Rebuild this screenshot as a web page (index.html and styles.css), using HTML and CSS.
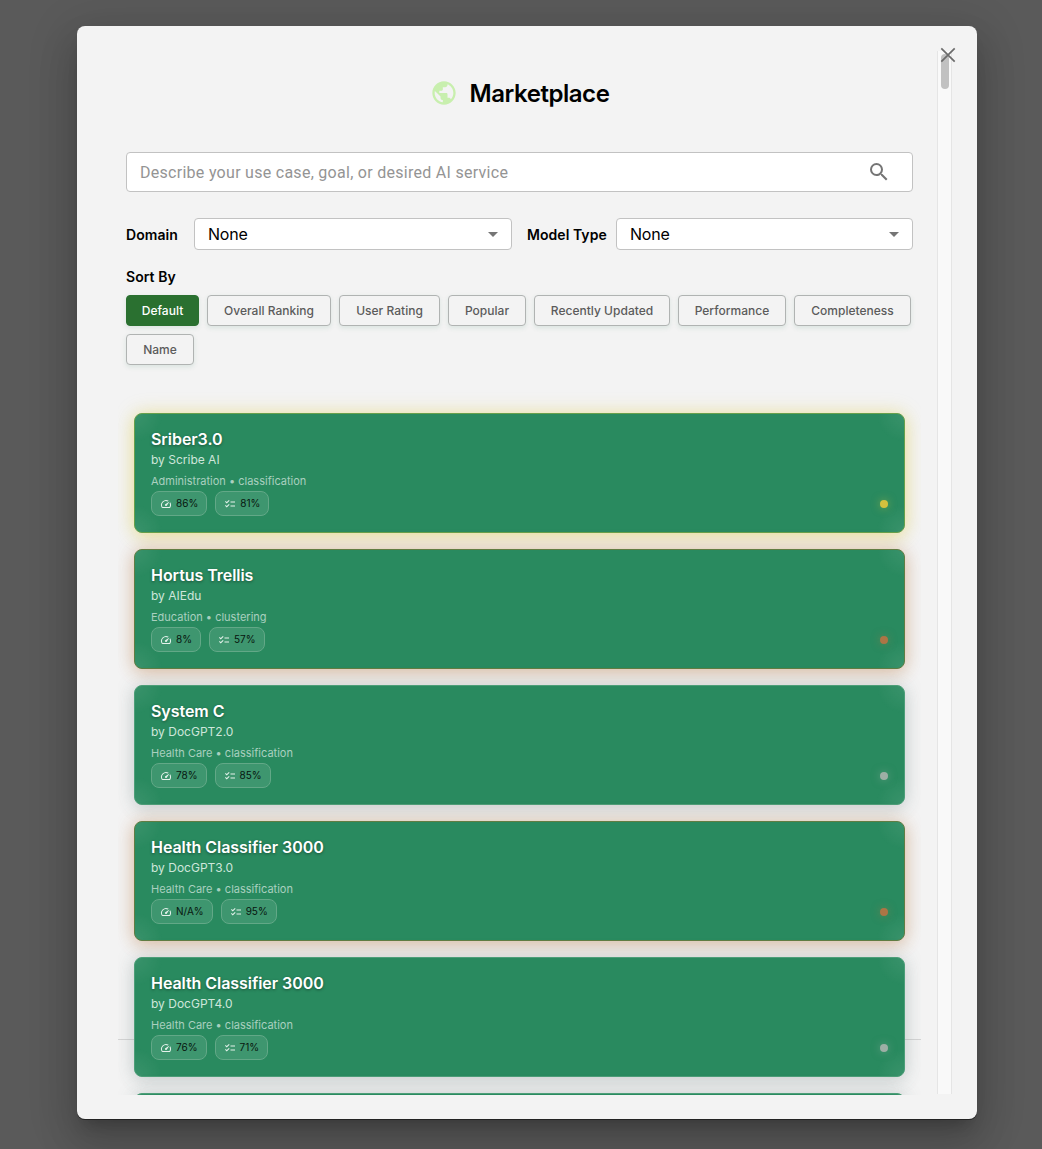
FILE: index.html
```html
<!DOCTYPE html>
<html lang="en">
<head>
<meta charset="utf-8">
<title>Marketplace</title>
<link rel="stylesheet" href="styles.css">
</head>
<body>
<svg class="sprite" aria-hidden="true">
  <symbol id="speed" viewBox="0 0 24 24"><path d="M20.38 8.57l-1.23 1.85a8 8 0 0 1-.22 7.58H5.07A8 8 0 0 1 15.58 6.85l1.85-1.23A10 10 0 0 0 3.35 19a2 2 0 0 0 1.72 1h13.85a2 2 0 0 0 1.74-1 10 10 0 0 0-.27-10.44zm-9.79 6.84a2 2 0 0 0 2.83 0l5.66-8.49-8.49 5.66a2 2 0 0 0 0 2.83z"/></symbol>
  <symbol id="checklist" viewBox="0 0 24 24"><path d="M22 7h-9v2h9V7zm0 8h-9v2h9v-2zM5.54 11L2 7.46l1.41-1.41 2.12 2.12 4.24-4.24 1.41 1.41L5.54 11zm0 8L2 15.46l1.41-1.41 2.12 2.12 4.24-4.24 1.41 1.41L5.54 19z"/></symbol>
</svg>
<main class="modal">
  <section class="content">
    <header class="heading">
      <svg class="globe" viewBox="0 0 24 24"><path d="M12 2C6.48 2 2 6.48 2 12s4.48 10 10 10 10-4.48 10-10S17.52 2 12 2zm-1 17.93c-3.95-.49-7-3.85-7-7.93 0-.62.08-1.21.21-1.79L9 15v1c0 1.1.9 2 2 2v1.93zm6.9-2.54c-.26-.81-1-1.39-1.9-1.39h-1v-3c0-.55-.45-1-1-1H8v-2h2c.55 0 1-.45 1-1V7h2c1.1 0 2-.9 2-2v-.41c2.93 1.19 5 4.06 5 7.41 0 2.08-.8 3.97-2.1 5.39z"/></svg>
      <h1>Marketplace</h1>
    </header>
    <div class="search">
      <span class="placeholder">Describe your use case, goal, or desired AI service</span>
      <svg class="search-icon" viewBox="0 0 24 24"><path d="M15.5 14h-.79l-.28-.27A6.47 6.47 0 0 0 16 9.5 6.5 6.5 0 1 0 9.5 16c1.61 0 3.09-.59 4.23-1.57l.27.28v.79l5 4.99L20.49 19l-4.99-5zm-6 0C7.01 14 5 11.99 5 9.5S7.01 5 9.5 5 14 7.01 14 9.5 11.99 14 9.5 14z"/></svg>
    </div>
    <div class="filters">
      <span class="label domain-label">Domain</span>
      <div class="select"><span>None</span><i class="arrow"></i></div>
      <span class="label model-label">Model Type</span>
      <div class="select model"><span>None</span><i class="arrow"></i></div>
    </div>
    <div class="label sort-label">Sort By</div>
    <div class="sorts">
      <button class="sort active w73">Default</button>
      <button class="sort w124">Overall Ranking</button>
      <button class="sort w101">User Rating</button>
      <button class="sort w78">Popular</button>
      <button class="sort w136">Recently Updated</button>
      <button class="sort w108">Performance</button>
      <button class="sort w117">Completeness</button>
      <button class="sort w68">Name</button>
    </div>
    <div class="list">
      <hr class="divider">
      <article class="card gold">
        <h2>Sriber3.0</h2><p class="by">by Scribe AI</p><p class="meta">Administration • classification</p>
        <div class="chips"><span class="chip"><svg><use href="#speed"/></svg>86%</span><span class="chip"><svg><use href="#checklist"/></svg>81%</span></div><i class="dot"></i>
      </article>
      <article class="card bronze">
        <h2>Hortus Trellis</h2><p class="by">by AIEdu</p><p class="meta">Education • clustering</p>
        <div class="chips"><span class="chip"><svg><use href="#speed"/></svg>8%</span><span class="chip"><svg><use href="#checklist"/></svg>57%</span></div><i class="dot"></i>
      </article>
      <article class="card silver">
        <h2>System C</h2><p class="by">by DocGPT2.0</p><p class="meta">Health Care • classification</p>
        <div class="chips"><span class="chip"><svg><use href="#speed"/></svg>78%</span><span class="chip"><svg><use href="#checklist"/></svg>85%</span></div><i class="dot"></i>
      </article>
      <article class="card bronze">
        <h2>Health Classifier 3000</h2><p class="by">by DocGPT3.0</p><p class="meta">Health Care • classification</p>
        <div class="chips"><span class="chip"><svg><use href="#speed"/></svg>N/A%</span><span class="chip"><svg><use href="#checklist"/></svg>95%</span></div><i class="dot"></i>
      </article>
      <article class="card silver">
        <h2>Health Classifier 3000</h2><p class="by">by DocGPT4.0</p><p class="meta">Health Care • classification</p>
        <div class="chips"><span class="chip"><svg><use href="#speed"/></svg>76%</span><span class="chip"><svg><use href="#checklist"/></svg>71%</span></div><i class="dot"></i>
      </article>
      <article class="card silver"></article>
    </div>
  </section>
  <div class="track"><div class="thumb"></div></div>
  <svg class="close" viewBox="0 0 24 24"><path d="M5.3 5.3l13.4 13.4M18.7 5.3L5.3 18.7"/></svg>
</main>
</body>
</html>
```

FILE: styles.css
```css
* { box-sizing: border-box; }
body { margin: 0; height: 1149px; padding: 26px 65px 30px 77px; background: #5a5a5a; font-family: Inter, sans-serif; color: #000; overflow: hidden; }
h1, h2, p { margin: 0; }
.sprite { position: absolute; width: 0; height: 0; }
.modal { position: relative; display: flex; gap: 16px; height: 1093px; padding: 25px 25px 24px 41px; background: #f3f3f3; border-radius: 8px; box-shadow: 0 1px 0 #222, 0 11px 15px -7px rgba(0,0,0,.2), 0 24px 38px 3px rgba(0,0,0,.14), 0 9px 46px 8px rgba(0,0,0,.12); }
.content { width: 803px; flex: none; overflow: hidden; }
.heading { display: flex; align-items: center; justify-content: center; gap: 12px; height: 84px; margin-bottom: 17px; }
.globe { width: 28px; height: 28px; fill: #c8efae; }
h1 { font-size: 24px; line-height: 32px; font-weight: 600; letter-spacing: -.46px; padding-top: 1px; }
.search { display: flex; align-items: center; justify-content: space-between; height: 40px; margin: 0 8px; padding: 0 21px 0 13px; background: #fff; border: 1px solid #c2c2c2; border-radius: 4px; }
.placeholder { padding-top: 1px; font: 16px/24px Roboto, sans-serif; color: #949494; letter-spacing: .28px; }
.search-icon { width: 24px; height: 24px; fill: #757575; }
.filters { display: flex; align-items: center; height: 32px; margin: 26px 8px 0; }
.label { font-size: 14px; line-height: 20px; font-weight: 600; }
.domain-label { width: 68px; padding-top: 2px; letter-spacing: .05px; }
.model-label { width: 104px; padding: 2px 0 0 15px; letter-spacing: .05px; }
.select { display: flex; align-items: center; justify-content: space-between; flex: none; width: 318px; height: 32px; padding: 0 13px; font-size: 16px; letter-spacing: -.2px; background: #fff; border: 1px solid #c2c2c2; border-radius: 4px; }
.select.model { width: 297px; }
.arrow { border: 5px solid transparent; border-top-color: #757575; border-bottom: 0; }
.sort-label { margin: 17px 8px 8px; letter-spacing: .05px; }
.sorts { display: flex; flex-wrap: wrap; gap: 8px; padding: 0 8px; }
.sort { height: 31px; padding: 0; background: #f3f3f3; border: 1px solid #b0b3b2; border-radius: 4px; font: 500 12px/18px Inter, sans-serif; letter-spacing: .02px; color: #5b5b5b; box-shadow: 0 2px 5px rgba(40,120,90,.12); }
.sort.active { color: #fff; background: #2a7030; border-color: #2a7030; }
.w73 { width: 73px; } .w124 { width: 124px; } .w101 { width: 101px; } .w78 { width: 78px; }
.w136 { width: 136px; } .w108 { width: 108px; } .w117 { width: 117px; } .w68 { width: 68px; }
.list { position: relative; display: flex; flex-direction: column; gap: 16px; margin-top: 24px; padding: 24px 16px 0; }
.divider { position: absolute; left: 0; top: 650px; width: 803px; height: 1px; margin: 0; border: 0; background: #d5d5d5; }
.card { position: relative; height: 120px; padding: 16px; flex: none; border: 1px solid var(--edge); border-radius: 8px; background: #298a5f; color: #fff; box-shadow: 0 0 20px var(--glow), 0 4px 16px var(--glow); }
.card::before { content: ""; position: absolute; inset: 0; border-radius: 7px; background: radial-gradient(circle at 0 0, rgba(255,255,255,.08), transparent 28px), radial-gradient(circle at 100% 0, rgba(255,255,255,.08), transparent 28px), radial-gradient(circle at 0 100%, rgba(255,255,255,.08), transparent 28px), radial-gradient(circle at 100% 100%, rgba(255,255,255,.08), transparent 28px); }
.gold { --edge: #68a04b; --glow: rgba(222,199,42,.27); --dot: #d4c13e; --dot-glow: rgba(212,193,62,.5); }
.bronze { --edge: #617d43; --glow: rgba(180,104,42,.24); --dot: #ad7545; --dot-glow: rgba(173,117,69,.5); }
.silver { --edge: #4d9e78; --glow: rgba(90,115,110,.17); --dot: #9dafa5; --dot-glow: rgba(157,175,165,.5); }
h2 { font-size: 16px; line-height: 19px; font-weight: 600; letter-spacing: -.05px; text-shadow: 0 1px 3px rgba(0,0,0,.4); }
.by { margin-top: 3px; font-size: 12px; line-height: 16px; color: #cee6db; }
.meta { margin-top: 5px; font-size: 11px; line-height: 16px; color: #aad0bf; }
.chips { display: flex; gap: 8px; margin-top: 2px; }
.chip { display: flex; align-items: center; gap: 4px; height: 25px; padding: 0 8px; border: 1px solid #62a887; border-radius: 8px; background: #3e966f; color: #07150e; font-size: 10px; font-weight: 400; line-height: 23px; }
.chip svg { width: 12px; height: 12px; fill: #e5f2ec; }
.dot { position: absolute; right: 16px; bottom: 24px; width: 8px; height: 8px; border-radius: 50%; background: var(--dot); box-shadow: 0 0 8px var(--dot-glow); }
.track { width: 15px; flex: none; height: 1043px; padding: 3px; background: #f9f9f9; border: 1px solid #e5e5e5; border-width: 0 1px; }
.thumb { width: 8px; height: 35px; border-radius: 4px; background: #c1c1c1; }
.close { position: absolute; right: 17px; top: 17px; width: 24px; height: 24px; fill: none; stroke: #6b6b6b; stroke-width: 1.7; }
```
